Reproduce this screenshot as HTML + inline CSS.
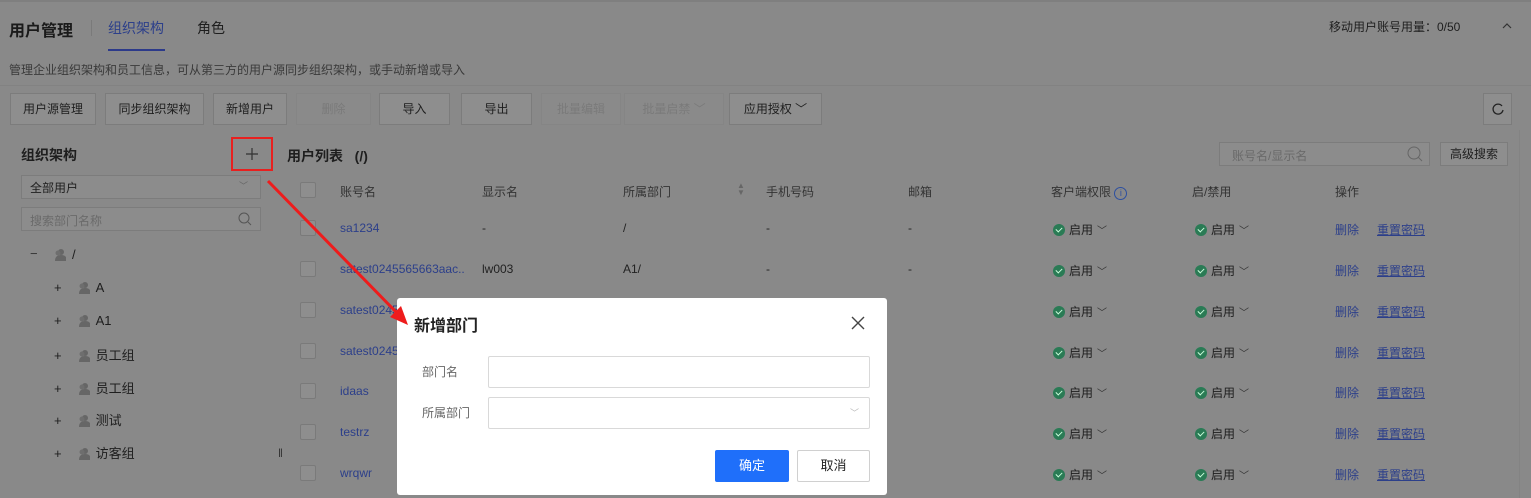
<!DOCTYPE html>
<html><head><meta charset="utf-8"><style>
*{margin:0;padding:0;box-sizing:border-box}
body{width:1531px;height:498px;overflow:hidden;background:#898989;font-family:"Liberation Sans","Noto Sans CJK SC",sans-serif;color:#222;font-size:12px;position:relative}
.a{position:absolute;white-space:nowrap}
.btn{position:absolute;top:93px;height:32px;border:1px solid #7c7c7c;background:#8e8e8e;color:#1e1e1e;font-size:12px;text-align:center;line-height:30px}
.dis{color:#7a7a7a;border-color:#858585;background:#8a8a8a}
.cb{position:absolute;left:300px;width:16px;height:16px;border:1px solid #7a7a7a;background:#8e8e8e;border-radius:2px}
.lk{color:#2c3f8a}
.ok{position:absolute;font-size:12px;color:#1e1e1e;font-weight:normal}
.ok i{display:inline-block;width:12px;height:12px;border-radius:50%;background:#2a7b55;vertical-align:-2px;margin-right:4px;position:relative}
.ok i:after{content:"";position:absolute;left:3px;top:2.5px;width:5px;height:3px;border-left:1.5px solid #cfd;border-bottom:1.5px solid #cfd;transform:rotate(-45deg)}
.ok b{font-weight:normal;color:#333;margin-left:4px;font-size:10px}
.tn{position:absolute;left:54px;font-size:13px;color:#1e1e1e}
.ic{display:inline-block;width:12px;height:13px;vertical-align:-2px;margin-right:6px}
</style></head><body>
<svg width="0" height="0" style="position:absolute"><defs><g id="p"><circle cx="7" cy="4" r="3" fill="#666"/><path d="M1 13 Q1 7 7 7 Q13 7 13 13Z" fill="#666"/><circle cx="4" cy="5" r="2.5" fill="#6e6e6e"/></g></defs></svg>
<div class="a" style="left:0;top:0;width:1531px;height:2px;background:#7f7f7f"></div>
<div class="a" style="left:9px;top:17px;font-size:16px;font-weight:bold;color:#1a1a1a">用户管理</div>
<div class="a" style="left:91px;top:20px;width:1px;height:16px;background:#7a7a7a"></div>
<div class="a" style="left:108px;top:18px;font-size:14px;color:#2c3f8a">组织架构</div>
<div class="a" style="left:108px;top:49px;width:57px;height:2px;background:#2c3a8a"></div>
<div class="a" style="left:197px;top:18px;font-size:14px;color:#1e1e1e">角色</div>
<div class="a" style="left:1329px;top:18px;font-size:12px;color:#1e1e1e">移动用户账号用量：0/50</div>
<svg class="a" style="left:1501px;top:22px" width="12" height="8"><path d="M2 6L6 2L10 6" stroke="#333" fill="none" stroke-width="1.2"/></svg>
<div class="a" style="left:9px;top:61px;font-size:12px;color:#3a3a3a">管理企业组织架构和员工信息，可从第三方的用户源同步组织架构，或手动新增或导入</div>
<div class="a" style="left:0;top:85px;width:1531px;height:1px;background:#828282"></div>
<div class="btn" style="left:10px;width:86px">用户源管理</div>
<div class="btn" style="left:105px;width:99px">同步组织架构</div>
<div class="btn" style="left:213px;width:74px">新增用户</div>
<div class="btn dis" style="left:296px;width:75px">删除</div>
<div class="btn" style="left:379px;width:71px">导入</div>
<div class="btn" style="left:461px;width:71px">导出</div>
<div class="btn dis" style="left:541px;width:80px">批量编辑</div>
<div class="btn dis" style="left:624px;width:100px">批量启禁 ﹀</div>
<div class="btn" style="left:729px;width:93px">应用授权 ﹀</div>
<div class="btn" style="left:1483px;width:29px"><svg width="14" height="14" style="margin-top:8px"><path d="M11 4A5 5 0 1 0 12 8" stroke="#222" fill="none" stroke-width="1.3"/></svg></div>
<div class="a" style="left:1519px;top:130px;width:1px;height:368px;background:#838383"></div>
<div class="a" style="left:21px;top:145px;font-size:14px;font-weight:bold;color:#1e1e1e">组织架构</div>
<div class="a" style="left:231px;top:137px;width:42px;height:34px;border:2px solid #e8201f"></div>
<svg class="a" style="left:245px;top:147px" width="14" height="14"><path d="M7 1V13M1 7H13" stroke="#333" stroke-width="1.2"/></svg>
<div class="a" style="left:21px;top:175px;width:240px;height:24px;border:1px solid #7c7c7c;background:#8c8c8c;padding:3px 8px;color:#1e1e1e">全部用户<span style="position:absolute;right:12px;color:#666;font-size:9px">﹀</span></div>
<div class="a" style="left:21px;top:207px;width:240px;height:24px;border:1px solid #7c7c7c;background:#8c8c8c;padding:4px 8px;color:#6a6a6a">搜索部门名称<svg style="position:absolute;right:8px;top:4px" width="14" height="14"><circle cx="6" cy="6" r="5" stroke="#555" fill="none"/><path d="M10 10L13 13" stroke="#555"/></svg></div>
<div class="a" style="left:30px;top:246px;font-size:13px;color:#333">−</div>
<div class="tn" style="top:247px"><svg class="ic" width="14" height="14"><use href="#p"/></svg>/</div>
<div class="tn" style="top:280px"><span style="margin-right:16px">+</span><svg class="ic" width="14" height="14"><use href="#p"/></svg>A</div>
<div class="tn" style="top:313px"><span style="margin-right:16px">+</span><svg class="ic" width="14" height="14"><use href="#p"/></svg>A1</div>
<div class="tn" style="top:345px"><span style="margin-right:16px">+</span><svg class="ic" width="14" height="14"><use href="#p"/></svg>员工组</div>
<div class="tn" style="top:378px"><span style="margin-right:16px">+</span><svg class="ic" width="14" height="14"><use href="#p"/></svg>员工组</div>
<div class="tn" style="top:410px"><span style="margin-right:16px">+</span><svg class="ic" width="14" height="14"><use href="#p"/></svg>测试</div>
<div class="tn" style="top:443px"><span style="margin-right:16px">+</span><svg class="ic" width="14" height="14"><use href="#p"/></svg>访客组</div>
<div class="a" style="left:278px;top:446px;font-size:12px;color:#333">‖</div>
<div class="a" style="left:287px;top:146px;font-size:14px;font-weight:bold;color:#1e1e1e">用户列表 &nbsp;&nbsp;(/)</div>
<div class="a" style="left:1219px;top:142px;width:211px;height:24px;border:1px solid #7c7c7c;background:#8c8c8c;padding:4px 12px;color:#6a6a6a">账号名/显示名<svg style="position:absolute;right:6px;top:3px" width="16" height="16"><circle cx="7" cy="7" r="6" stroke="#666" fill="none"/><path d="M11 11L15 15" stroke="#666"/></svg></div>
<div class="btn" style="left:1440px;top:142px;height:24px;line-height:22px;width:68px">高级搜索</div>
<div class="cb" style="top:182px"></div>
<div class="a" style="left:340px;top:183px;color:#333">账号名</div>
<div class="a" style="left:482px;top:183px;color:#333">显示名</div>
<div class="a" style="left:623px;top:183px;color:#333">所属部门</div>
<div class="a" style="left:737px;top:182px;color:#666;font-size:8px;line-height:7px">▲<br>▼</div>
<div class="a" style="left:766px;top:183px;color:#333">手机号码</div>
<div class="a" style="left:908px;top:183px;color:#333">邮箱</div>
<div class="a" style="left:1051px;top:183px;color:#333">客户端权限 <span style="display:inline-block;width:13px;height:13px;border:1px solid #2c4fa0;border-radius:50%;color:#2c4fa0;font-size:9px;text-align:center;line-height:11px">i</span></div>
<div class="a" style="left:1192px;top:183px;color:#333">启/禁用</div>
<div class="a" style="left:1335px;top:183px;color:#333">操作</div>

<div class="cb" style="top:220px"></div><div class="a lk" style="left:340px;top:221px">sa1234</div><div class="a" style="left:482px;top:221px">-</div><div class="a" style="left:623px;top:221px">/</div><div class="a" style="left:766px;top:221px">-</div><div class="a" style="left:908px;top:221px">-</div>
<div class="cb" style="top:261px"></div><div class="a lk" style="left:340px;top:262px">satest0245565663aac..</div><div class="a" style="left:482px;top:262px">lw003</div><div class="a" style="left:623px;top:262px">A1/</div><div class="a" style="left:766px;top:262px">-</div><div class="a" style="left:908px;top:262px">-</div>
<div class="cb" style="top:302px"></div><div class="a lk" style="left:340px;top:303px">satest0245</div>
<div class="cb" style="top:343px"></div><div class="a lk" style="left:340px;top:344px">satest0245</div>
<div class="cb" style="top:383px"></div><div class="a lk" style="left:340px;top:384px">idaas</div>
<div class="cb" style="top:424px"></div><div class="a lk" style="left:340px;top:425px">testrz</div>
<div class="cb" style="top:465px"></div><div class="a lk" style="left:340px;top:466px">wrqwr</div>

<div class="ok" style="left:1053px;top:221px"><i></i>启用<b>﹀</b></div><div class="ok" style="left:1195px;top:221px"><i></i>启用<b>﹀</b></div><div class="a lk" style="left:1335px;top:221px">删除</div><div class="a lk" style="left:1377px;top:221px;text-decoration:underline">重置密码</div>
<div class="ok" style="left:1053px;top:262px"><i></i>启用<b>﹀</b></div><div class="ok" style="left:1195px;top:262px"><i></i>启用<b>﹀</b></div><div class="a lk" style="left:1335px;top:262px">删除</div><div class="a lk" style="left:1377px;top:262px;text-decoration:underline">重置密码</div>
<div class="ok" style="left:1053px;top:303px"><i></i>启用<b>﹀</b></div><div class="ok" style="left:1195px;top:303px"><i></i>启用<b>﹀</b></div><div class="a lk" style="left:1335px;top:303px">删除</div><div class="a lk" style="left:1377px;top:303px;text-decoration:underline">重置密码</div>
<div class="ok" style="left:1053px;top:344px"><i></i>启用<b>﹀</b></div><div class="ok" style="left:1195px;top:344px"><i></i>启用<b>﹀</b></div><div class="a lk" style="left:1335px;top:344px">删除</div><div class="a lk" style="left:1377px;top:344px;text-decoration:underline">重置密码</div>
<div class="ok" style="left:1053px;top:384px"><i></i>启用<b>﹀</b></div><div class="ok" style="left:1195px;top:384px"><i></i>启用<b>﹀</b></div><div class="a lk" style="left:1335px;top:384px">删除</div><div class="a lk" style="left:1377px;top:384px;text-decoration:underline">重置密码</div>
<div class="ok" style="left:1053px;top:425px"><i></i>启用<b>﹀</b></div><div class="ok" style="left:1195px;top:425px"><i></i>启用<b>﹀</b></div><div class="a lk" style="left:1335px;top:425px">删除</div><div class="a lk" style="left:1377px;top:425px;text-decoration:underline">重置密码</div>
<div class="ok" style="left:1053px;top:466px"><i></i>启用<b>﹀</b></div><div class="ok" style="left:1195px;top:466px"><i></i>启用<b>﹀</b></div><div class="a lk" style="left:1335px;top:466px">删除</div><div class="a lk" style="left:1377px;top:466px;text-decoration:underline">重置密码</div>

<div class="a" style="left:397px;top:298px;width:490px;height:197px;background:#fff;border-radius:3px">
  <div class="a" style="left:17px;top:14px;font-size:16px;font-weight:bold;color:#222">新增部门</div>
  <svg class="a" style="left:454px;top:18px" width="14" height="14"><path d="M1 1L13 13M13 1L1 13" stroke="#444" stroke-width="1.4"/></svg>
  <div class="a" style="left:25px;top:65px;color:#666;font-size:12px">部门名</div>
  <div class="a" style="left:91px;top:58px;width:382px;height:32px;border:1px solid #d9d9d9;border-radius:2px"></div>
  <div class="a" style="left:25px;top:106px;color:#666;font-size:12px">所属部门</div>
  <div class="a" style="left:91px;top:99px;width:382px;height:32px;border:1px solid #d9d9d9;border-radius:2px"><span style="position:absolute;right:10px;top:8px;color:#bbb;font-size:9px">﹀</span></div>
  <div class="a" style="left:318px;top:152px;width:74px;height:32px;background:#1f6ffa;color:#fff;border-radius:2px;text-align:center;line-height:32px;font-size:13px">确定</div>
  <div class="a" style="left:400px;top:152px;width:73px;height:32px;border:1px solid #d0d0d0;color:#222;border-radius:2px;text-align:center;line-height:30px;font-size:13px">取消</div>
</div>
<svg class="a" style="left:0;top:0" width="1531" height="498"><line x1="268" y1="181" x2="397" y2="313" stroke="#ee1c1c" stroke-width="3"/><polygon points="408,325 390,317 401,306" fill="#ee1c1c"/></svg>
</body></html>
